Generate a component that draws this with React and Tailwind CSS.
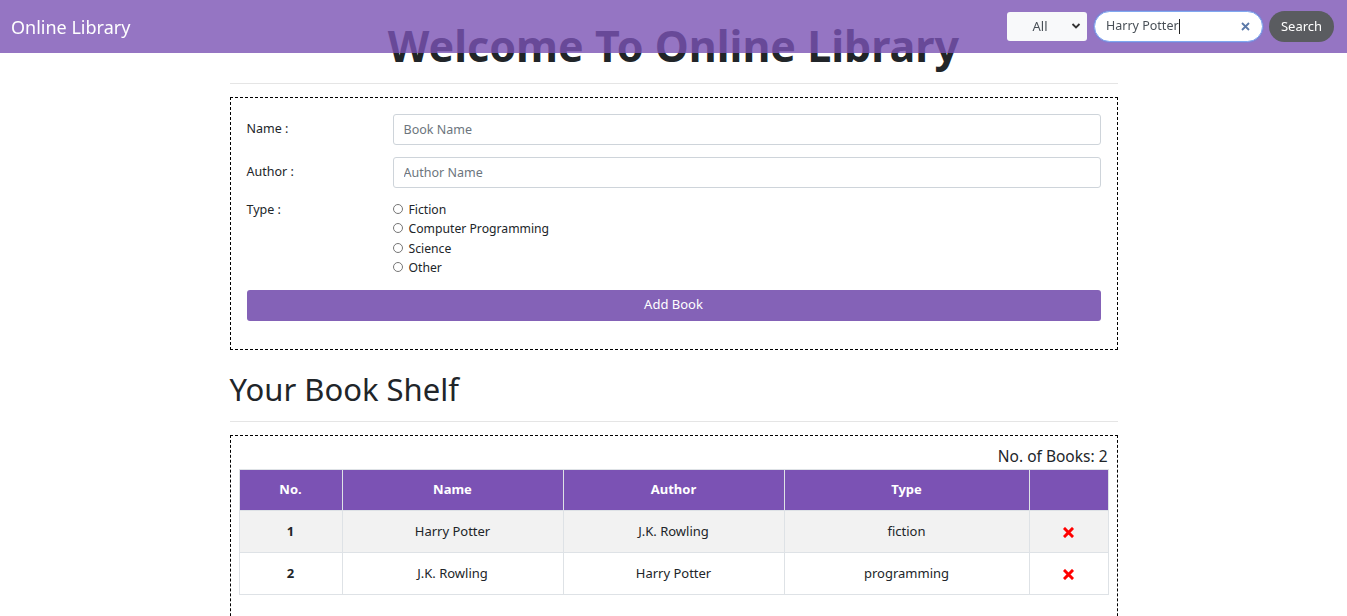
import { useState } from "react";

const books = [
  { id: 1, name: "Harry Potter", author: "J.K. Rowling", type: "fiction" },
  { id: 2, name: "J.K. Rowling", author: "Harry Potter", type: "programming" },
];

const types = ["Fiction", "Computer Programming", "Science", "Other"];

const RedX = () => (
  <svg width="11" height="11" viewBox="0 0 11 11" className="inline-block">
    <path d="M2 2 L9 9 M9 2 L2 9" stroke="#ff0000" strokeWidth="3" strokeLinecap="square" />
  </svg>
);

const Navbar = () => (
  <nav className="fixed top-0 left-0 right-0 z-10 h-[53px] bg-[rgba(123,82,180,0.8)] flex items-center justify-between pl-[11px] pr-[13px]">
    <span className="text-white text-[18px] leading-none">Online Library</span>
    <div className="flex items-center">
      {/* Filter select */}
      <div className="relative w-[80px] h-[29px] bg-[#f8f9fa] rounded-[3px] flex items-center justify-center text-[13px] text-[#495057] mr-[7px]">
        <span className="-ml-[14px]">All</span>
        <svg className="absolute right-[6px] top-[10px]" width="10" height="8" viewBox="0 0 10 8">
          <path d="M1.5 2 L5 5.5 L8.5 2" stroke="#333" strokeWidth="1.8" fill="none" />
        </svg>
      </div>
      {/* Search input (focused) */}
      <div className="relative w-[169px] h-[31px] bg-white rounded-full border border-[#80a8f0] shadow-[0_0_0_1px_rgba(100,140,230,0.35)] flex items-center pl-[11px] text-[12.5px] text-[#495057] mr-[6px]">
        <span>Harry Potter</span>
        <span className="inline-block w-px h-[15px] bg-[#222]" />
        <svg className="absolute right-[12px] top-[10px]" width="9" height="9" viewBox="0 0 9 9">
          <path d="M1 1 L8 8 M8 1 L1 8" stroke="#5b79a8" strokeWidth="1.8" />
        </svg>
      </div>
      <button className="h-[31px] w-[65px] rounded-full bg-[#5a5c60] text-white text-[13px]">
        Search
      </button>
    </div>
  </nav>
);

const BookForm = () => {
  const [type, setType] = useState("");
  return (
    <div className="border border-dashed border-black px-[16px] pt-[16px] pb-[28px]">
      <div className="flex items-center">
        <label className="w-[146px] text-[12.5px] text-[#212529]">Name :</label>
        <input
          placeholder="Book Name"
          className="flex-1 h-[31px] border border-[#ced4da] rounded-[3px] px-[10px] text-[12.5px] placeholder:text-[#6c757d] outline-none"
        />
      </div>
      <div className="flex items-center mt-[12px]">
        <label className="w-[146px] text-[12.5px] text-[#212529]">Author :</label>
        <input
          placeholder="Author Name"
          className="flex-1 h-[31px] border border-[#ced4da] rounded-[3px] px-[10px] text-[12.5px] placeholder:text-[#6c757d] outline-none"
        />
      </div>
      <div className="flex mt-[12px]">
        <label className="w-[146px] text-[12.5px] text-[#212529] leading-[19.5px]">Type :</label>
        <div className="flex flex-col">
          {types.map((t) => (
            <label key={t} className="flex items-start text-[12.2px] text-[#212529] leading-[19.5px]" onClick={() => setType(t)}>
              <span className="mt-[4px] w-[10px] h-[10px] rounded-full border border-[#767676] bg-white mr-[6px] flex items-center justify-center">
                {type === t && <span className="w-[5px] h-[5px] rounded-full bg-[#333]" />}
              </span>
              {t}
            </label>
          ))}
        </div>
      </div>
      <button className="mt-[12px] w-full h-[31px] rounded-[3px] bg-[#8462b7] text-white text-[13px]">
        Add Book
      </button>
    </div>
  );
};

const BookShelf = () => (
  <div className="border border-dashed border-black px-[8px] pt-[8px] pb-[40px]">
    <div className="text-right text-[15.5px] text-[#212529] leading-[24px] pr-[1px] mb-[1px]">
      No. of Books: {books.length}
    </div>
    <table className="w-full border-collapse text-[13px] text-center">
      <thead>
        <tr className="bg-[#7b52b4] text-white font-bold h-[41px]">
          <th className="w-[103px] border border-[#dee2e6]">No.</th>
          <th className="w-[221px] border border-[#dee2e6]">Name</th>
          <th className="w-[221px] border border-[#dee2e6]">Author</th>
          <th className="w-[245px] border border-[#dee2e6]">Type</th>
          <th className="border border-[#dee2e6]"></th>
        </tr>
      </thead>
      <tbody>
        {books.map((b, i) => (
          <tr key={b.id} className={`h-[42px] text-[#212529] ${i % 2 === 0 ? "bg-[#f2f2f2]" : "bg-white"}`}>
            <td className="border border-[#dee2e6] font-bold">{b.id}</td>
            <td className="border border-[#dee2e6]">{b.name}</td>
            <td className="border border-[#dee2e6]">{b.author}</td>
            <td className="border border-[#dee2e6]">{b.type}</td>
            <td className="border border-[#dee2e6]">
              <RedX />
            </td>
          </tr>
        ))}
      </tbody>
    </table>
  </div>
);

export default function App() {
  return (
    <div className="min-h-screen bg-white font-['Noto_Sans',sans-serif]">
      <Navbar />
      <div className="w-[888px] mx-auto pt-[20px]">
        <h1 className="text-center text-[43px] font-bold leading-[1.2] text-[#212529]">
          Welcome To Online Library
        </h1>
        <hr className="mt-[11px] mb-[13px] border-t border-[#e5e5e5]" />
        <BookForm />
        <h2 className="mt-[21px] text-[31px] leading-[1.2] text-[#212529]">Your Book Shelf</h2>
        <hr className="mt-[13px] mb-[13px] border-t border-[#e5e5e5]" />
        <BookShelf />
      </div>
    </div>
  );
}
